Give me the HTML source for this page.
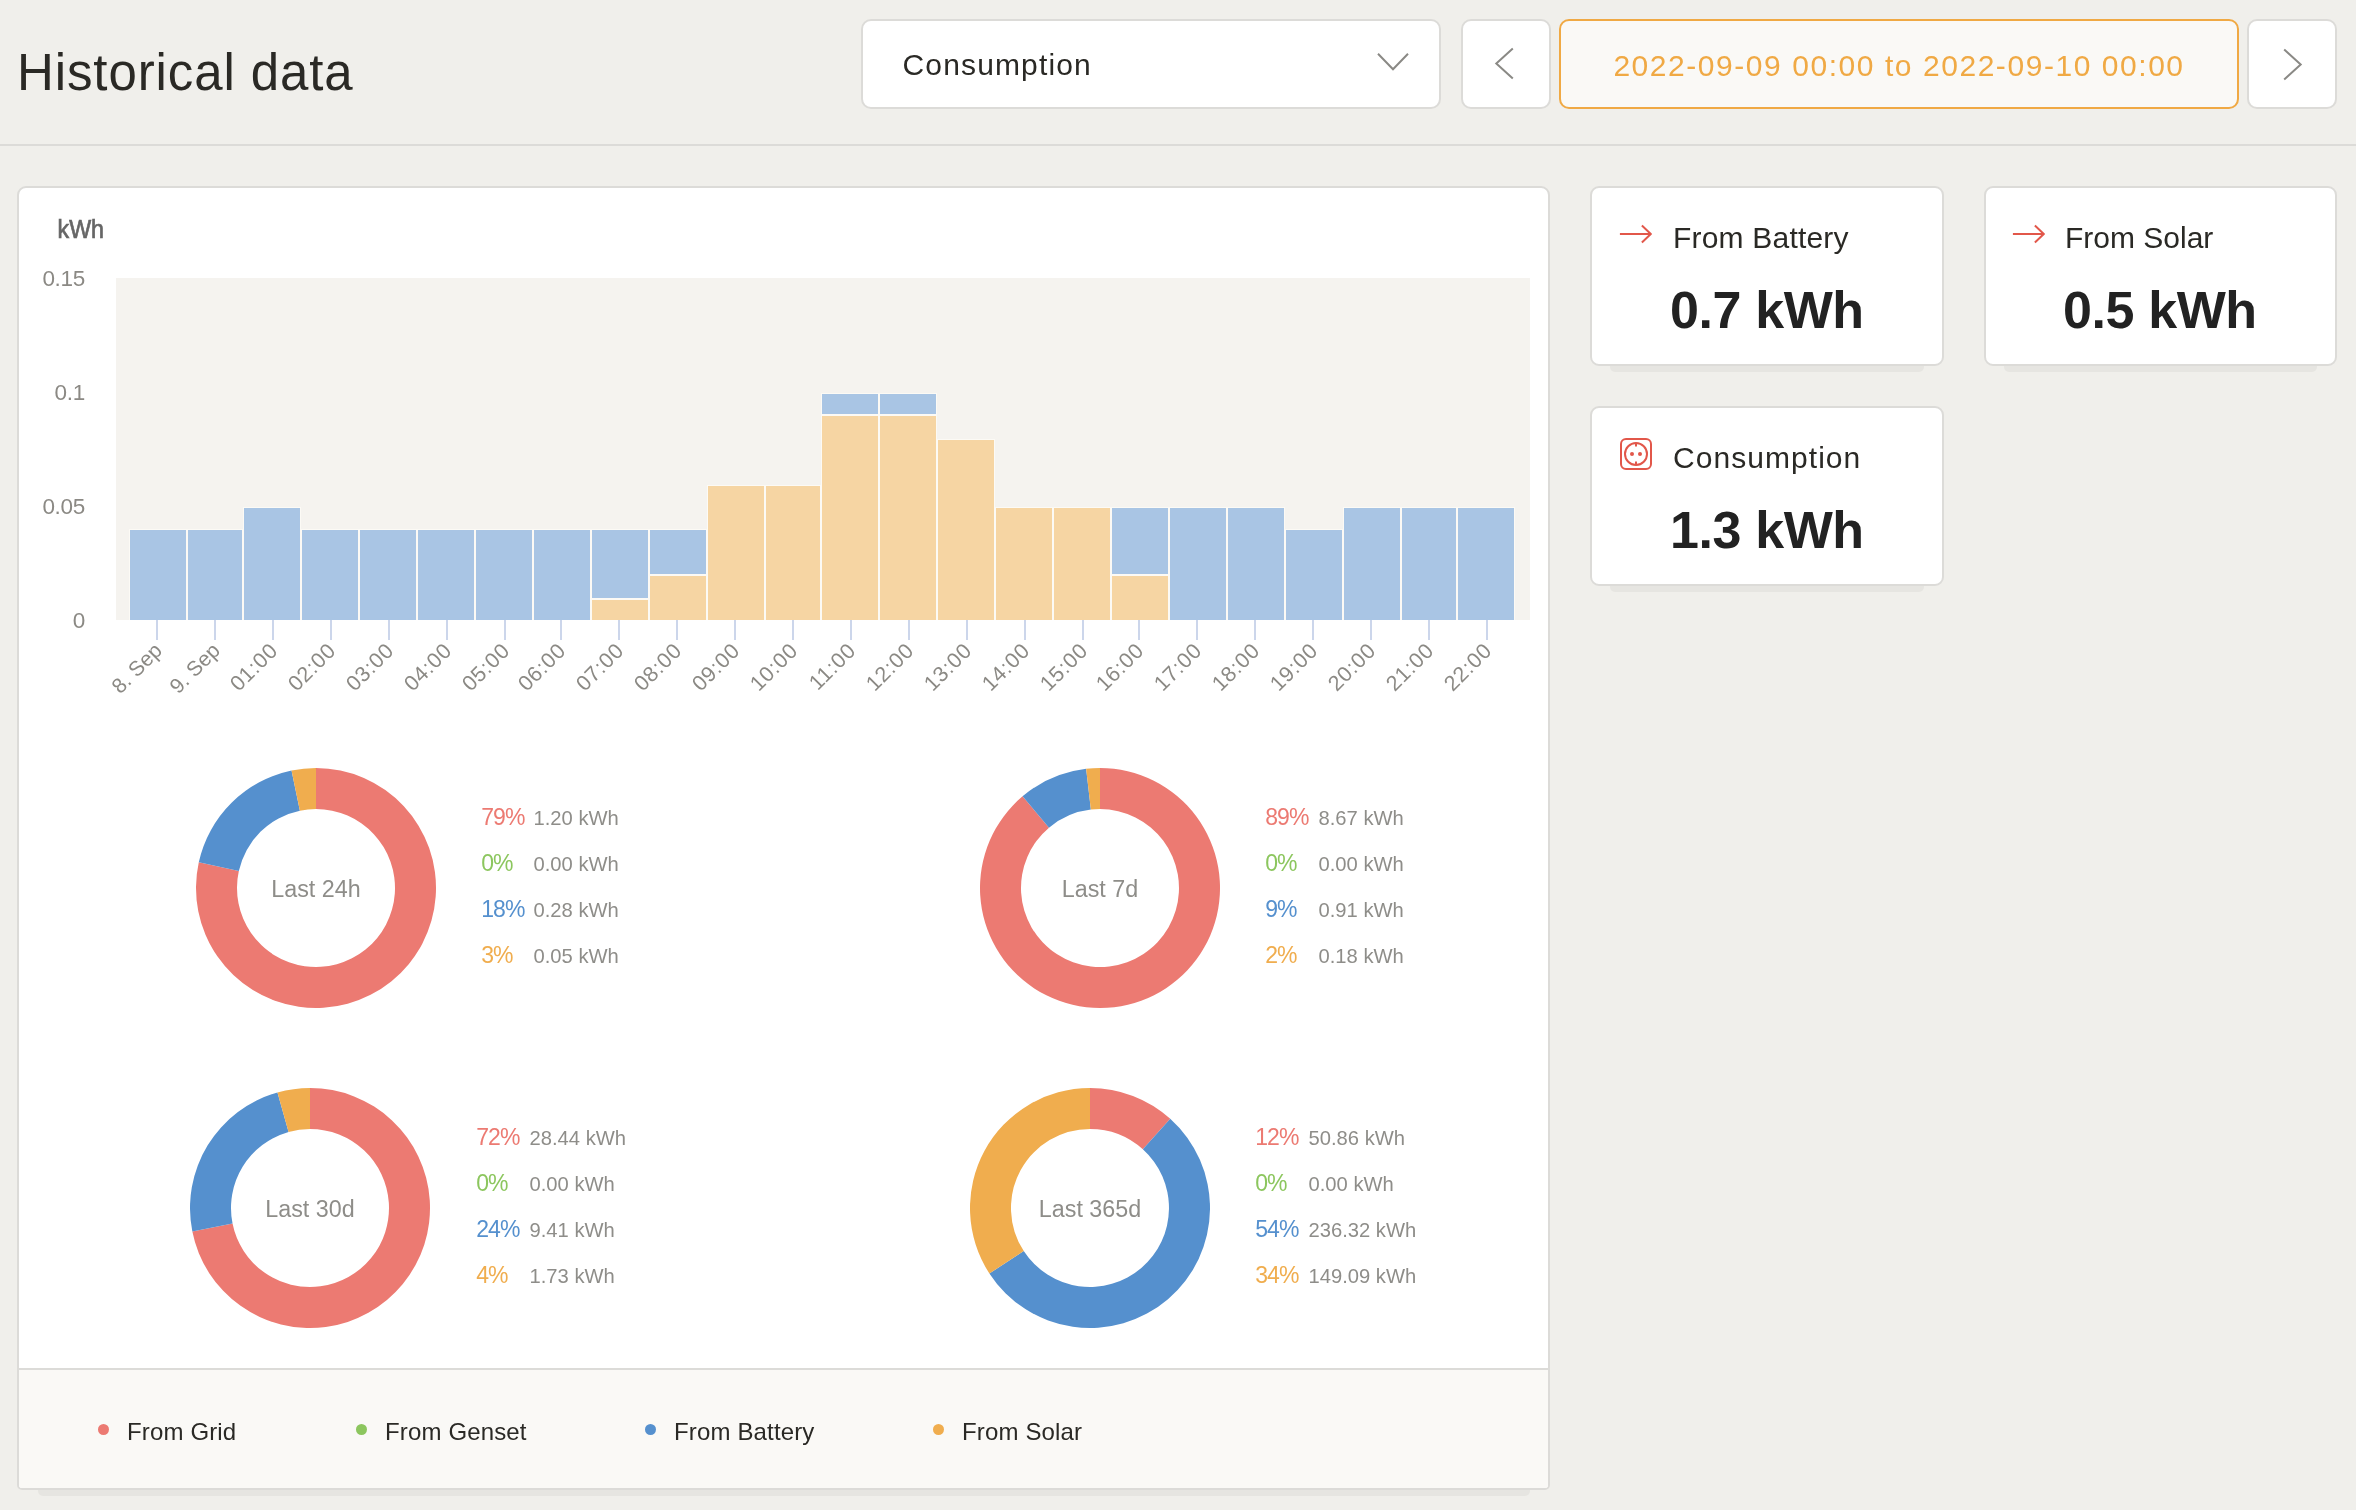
<!DOCTYPE html>
<html lang="en">
<head>
<meta charset="utf-8">
<title>Historical data</title>
<style>
html,body{margin:0;padding:0;}
body{width:2356px;height:1510px;overflow:hidden;background:#f0efeb;font-family:"Liberation Sans",sans-serif;color:#2a2925;position:relative;}
svg text{font-family:"Liberation Sans",sans-serif;}
h1,.box,.panel,.card{will-change:transform;}
.abs{position:absolute;}
h1{position:absolute;left:16.5px;top:43px;margin:0;font-weight:normal;font-size:51px;line-height:60px;letter-spacing:0.9px;white-space:nowrap;color:#2a2925;}
.hr{position:absolute;left:0;top:144px;width:2356px;height:2px;background:#dcdbd8;}
.box{position:absolute;box-sizing:border-box;border:2px solid #dcdbd8;border-radius:10px;background:#fff;top:19px;height:90px;}
.select{left:861px;width:580px;}
.select span{position:absolute;left:39.5px;top:25.5px;font-size:30px;line-height:36px;letter-spacing:1.15px;white-space:nowrap;}
.select svg{position:absolute;left:511.5px;top:29.3px;}
.prev{left:1461px;width:90px;}
.next{left:2247px;width:90px;}
.date{left:1559px;top:19px;width:680px;height:90px;border-color:#f0a944;background:#faf9f6;color:#f0a944;}
.date span{position:absolute;left:0;right:0;top:27px;text-align:center;font-size:30px;line-height:36px;letter-spacing:1.55px;white-space:nowrap;}
.panel{position:absolute;left:17px;top:186px;width:1533px;height:1304px;box-sizing:border-box;border:2px solid #dcdbd8;border-radius:9px 9px 5px 5px;background:#fff;}
.shadow{position:absolute;background:#e6e5e1;border-radius:0 0 5px 5px;height:20px;}
.panel svg{position:absolute;left:-2px;}
.panel svg.chart{top:-2px;}
.panel svg.donuts{top:560px;}
.footer{position:absolute;left:0;right:0;top:1180px;bottom:0;border-top:2px solid #dcdbd8;background:#faf9f6;border-radius:0 0 3px 3px;}
.leg{position:absolute;top:47px;letter-spacing:0.15px;font-size:24px;line-height:30px;white-space:nowrap;color:#2a2925;}
.leg i{position:absolute;left:-29px;top:7px;width:11px;height:11px;border-radius:50%;}
.card{position:absolute;box-sizing:border-box;width:353px;height:180px;border:2px solid #dcdbd8;border-radius:9px;background:#fff;}
.card .t{position:absolute;left:80px;top:32px;letter-spacing:0.2px;font-size:30px;line-height:36px;white-space:nowrap;}
.card .v{position:absolute;left:77px;top:92px;font-size:52px;line-height:60px;font-weight:bold;letter-spacing:-0.4px;white-space:nowrap;color:#222;}
.card svg{position:absolute;left:26px;top:28px;}
.card.w{width:354px;}
.card.w > *{margin-left:1px;}
</style>
</head>
<body>
<h1>Historical data</h1>
<div class="box select"><span>Consumption</span>
<svg width="36" height="24" viewBox="0 0 36 24"><path d="M3 3.8L18 19.3L33 3.8" fill="none" stroke="#8a8985" stroke-width="2"/></svg>
</div>
<div class="box prev"><svg class="abs" style="left:29px;top:25.4px" width="24" height="36" viewBox="0 0 24 36"><path d="M20.8 2.5L4.3 17.5L20.8 32.5" fill="none" stroke="#8a8985" stroke-width="2"/></svg></div>
<div class="box date"><span>2022-09-09 00:00 to 2022-09-10 00:00</span></div>
<div class="box next"><svg class="abs" style="left:31.8px;top:25.5px" width="24" height="36" viewBox="0 0 24 36"><path d="M3.2 2.5L19.7 17.5L3.2 32.5" fill="none" stroke="#8a8985" stroke-width="2"/></svg></div>
<div class="hr"></div>

<div class="shadow" style="left:38px;top:1476px;width:1492px;"></div>
<div class="panel">
<svg class="chart" width="1533" height="560" viewBox="17 186 1533 560">
<rect x="116" y="278" width="1414" height="342" fill="#f5f3ef"/>
<rect x="129" y="529" width="58" height="91" fill="#fcfaf5"/>
<rect x="130" y="530" width="56" height="90" fill="#a9c5e4"/>
<rect x="187" y="529" width="56" height="91" fill="#fcfaf5"/>
<rect x="188" y="530" width="54" height="90" fill="#a9c5e4"/>
<rect x="243" y="507" width="58" height="113" fill="#fcfaf5"/>
<rect x="244" y="508" width="56" height="112" fill="#a9c5e4"/>
<rect x="301" y="529" width="58" height="91" fill="#fcfaf5"/>
<rect x="302" y="530" width="56" height="90" fill="#a9c5e4"/>
<rect x="359" y="529" width="58" height="91" fill="#fcfaf5"/>
<rect x="360" y="530" width="56" height="90" fill="#a9c5e4"/>
<rect x="417" y="529" width="58" height="91" fill="#fcfaf5"/>
<rect x="418" y="530" width="56" height="90" fill="#a9c5e4"/>
<rect x="475" y="529" width="58" height="91" fill="#fcfaf5"/>
<rect x="476" y="530" width="56" height="90" fill="#a9c5e4"/>
<rect x="533" y="529" width="58" height="91" fill="#fcfaf5"/>
<rect x="534" y="530" width="56" height="90" fill="#a9c5e4"/>
<rect x="591" y="529" width="58" height="69" fill="#fcfaf5"/>
<rect x="592" y="530" width="56" height="68" fill="#a9c5e4"/>
<rect x="591" y="598" width="58" height="2" fill="#fcfaf5"/>
<rect x="591" y="599" width="58" height="21" fill="#fcfaf5"/>
<rect x="592" y="600" width="56" height="20" fill="#f6d5a3"/>
<rect x="649" y="529" width="58" height="45" fill="#fcfaf5"/>
<rect x="650" y="530" width="56" height="44" fill="#a9c5e4"/>
<rect x="649" y="574" width="58" height="2" fill="#fcfaf5"/>
<rect x="649" y="575" width="58" height="45" fill="#fcfaf5"/>
<rect x="650" y="576" width="56" height="44" fill="#f6d5a3"/>
<rect x="707" y="485" width="58" height="135" fill="#fcfaf5"/>
<rect x="708" y="486" width="56" height="134" fill="#f6d5a3"/>
<rect x="765" y="485" width="56" height="135" fill="#fcfaf5"/>
<rect x="766" y="486" width="54" height="134" fill="#f6d5a3"/>
<rect x="821" y="393" width="58" height="21" fill="#fcfaf5"/>
<rect x="822" y="394" width="56" height="20" fill="#a9c5e4"/>
<rect x="821" y="414" width="58" height="2" fill="#fcfaf5"/>
<rect x="821" y="415" width="58" height="205" fill="#fcfaf5"/>
<rect x="822" y="416" width="56" height="204" fill="#f6d5a3"/>
<rect x="879" y="393" width="58" height="21" fill="#fcfaf5"/>
<rect x="880" y="394" width="56" height="20" fill="#a9c5e4"/>
<rect x="879" y="414" width="58" height="2" fill="#fcfaf5"/>
<rect x="879" y="415" width="58" height="205" fill="#fcfaf5"/>
<rect x="880" y="416" width="56" height="204" fill="#f6d5a3"/>
<rect x="937" y="439" width="58" height="181" fill="#fcfaf5"/>
<rect x="938" y="440" width="56" height="180" fill="#f6d5a3"/>
<rect x="995" y="507" width="58" height="113" fill="#fcfaf5"/>
<rect x="996" y="508" width="56" height="112" fill="#f6d5a3"/>
<rect x="1053" y="507" width="58" height="113" fill="#fcfaf5"/>
<rect x="1054" y="508" width="56" height="112" fill="#f6d5a3"/>
<rect x="1111" y="507" width="58" height="67" fill="#fcfaf5"/>
<rect x="1112" y="508" width="56" height="66" fill="#a9c5e4"/>
<rect x="1111" y="574" width="58" height="2" fill="#fcfaf5"/>
<rect x="1111" y="575" width="58" height="45" fill="#fcfaf5"/>
<rect x="1112" y="576" width="56" height="44" fill="#f6d5a3"/>
<rect x="1169" y="507" width="58" height="113" fill="#fcfaf5"/>
<rect x="1170" y="508" width="56" height="112" fill="#a9c5e4"/>
<rect x="1227" y="507" width="58" height="113" fill="#fcfaf5"/>
<rect x="1228" y="508" width="56" height="112" fill="#a9c5e4"/>
<rect x="1285" y="529" width="58" height="91" fill="#fcfaf5"/>
<rect x="1286" y="530" width="56" height="90" fill="#a9c5e4"/>
<rect x="1343" y="507" width="58" height="113" fill="#fcfaf5"/>
<rect x="1344" y="508" width="56" height="112" fill="#a9c5e4"/>
<rect x="1401" y="507" width="56" height="113" fill="#fcfaf5"/>
<rect x="1402" y="508" width="54" height="112" fill="#a9c5e4"/>
<rect x="1457" y="507" width="58" height="113" fill="#fcfaf5"/>
<rect x="1458" y="508" width="56" height="112" fill="#a9c5e4"/>
<rect x="156" y="620" width="2" height="20" fill="#ccd6eb"/>
<rect x="214" y="620" width="2" height="20" fill="#ccd6eb"/>
<rect x="272" y="620" width="2" height="20" fill="#ccd6eb"/>
<rect x="330" y="620" width="2" height="20" fill="#ccd6eb"/>
<rect x="388" y="620" width="2" height="20" fill="#ccd6eb"/>
<rect x="446" y="620" width="2" height="20" fill="#ccd6eb"/>
<rect x="504" y="620" width="2" height="20" fill="#ccd6eb"/>
<rect x="560" y="620" width="2" height="20" fill="#ccd6eb"/>
<rect x="618" y="620" width="2" height="20" fill="#ccd6eb"/>
<rect x="676" y="620" width="2" height="20" fill="#ccd6eb"/>
<rect x="734" y="620" width="2" height="20" fill="#ccd6eb"/>
<rect x="792" y="620" width="2" height="20" fill="#ccd6eb"/>
<rect x="850" y="620" width="2" height="20" fill="#ccd6eb"/>
<rect x="908" y="620" width="2" height="20" fill="#ccd6eb"/>
<rect x="966" y="620" width="2" height="20" fill="#ccd6eb"/>
<rect x="1024" y="620" width="2" height="20" fill="#ccd6eb"/>
<rect x="1082" y="620" width="2" height="20" fill="#ccd6eb"/>
<rect x="1138" y="620" width="2" height="20" fill="#ccd6eb"/>
<rect x="1196" y="620" width="2" height="20" fill="#ccd6eb"/>
<rect x="1254" y="620" width="2" height="20" fill="#ccd6eb"/>
<rect x="1312" y="620" width="2" height="20" fill="#ccd6eb"/>
<rect x="1370" y="620" width="2" height="20" fill="#ccd6eb"/>
<rect x="1428" y="620" width="2" height="20" fill="#ccd6eb"/>
<rect x="1486" y="620" width="2" height="20" fill="#ccd6eb"/>
<text x="85" y="286" text-anchor="end" font-size="22.5" letter-spacing="-0.3" fill="#8b8984">0.15</text>
<text x="85" y="400" text-anchor="end" font-size="22.5" letter-spacing="-0.3" fill="#8b8984">0.1</text>
<text x="85" y="514" text-anchor="end" font-size="22.5" letter-spacing="-0.3" fill="#8b8984">0.05</text>
<text x="85" y="628" text-anchor="end" font-size="22.5" letter-spacing="-0.3" fill="#8b8984">0</text>
<text x="163.2" y="651.8" text-anchor="end" font-size="21" fill="#8b8984" transform="rotate(-45 163.2 651.8)">8. Sep</text>
<text x="221.2" y="651.8" text-anchor="end" font-size="21" fill="#8b8984" transform="rotate(-45 221.2 651.8)">9. Sep</text>
<text x="279.2" y="651.8" text-anchor="end" font-size="21.5" letter-spacing="0.7" fill="#8b8984" transform="rotate(-45 279.2 651.8)">01:00</text>
<text x="337.2" y="651.8" text-anchor="end" font-size="21.5" letter-spacing="0.7" fill="#8b8984" transform="rotate(-45 337.2 651.8)">02:00</text>
<text x="395.2" y="651.8" text-anchor="end" font-size="21.5" letter-spacing="0.7" fill="#8b8984" transform="rotate(-45 395.2 651.8)">03:00</text>
<text x="453.2" y="651.8" text-anchor="end" font-size="21.5" letter-spacing="0.7" fill="#8b8984" transform="rotate(-45 453.2 651.8)">04:00</text>
<text x="511.2" y="651.8" text-anchor="end" font-size="21.5" letter-spacing="0.7" fill="#8b8984" transform="rotate(-45 511.2 651.8)">05:00</text>
<text x="567.2" y="651.8" text-anchor="end" font-size="21.5" letter-spacing="0.7" fill="#8b8984" transform="rotate(-45 567.2 651.8)">06:00</text>
<text x="625.2" y="651.8" text-anchor="end" font-size="21.5" letter-spacing="0.7" fill="#8b8984" transform="rotate(-45 625.2 651.8)">07:00</text>
<text x="683.2" y="651.8" text-anchor="end" font-size="21.5" letter-spacing="0.7" fill="#8b8984" transform="rotate(-45 683.2 651.8)">08:00</text>
<text x="741.2" y="651.8" text-anchor="end" font-size="21.5" letter-spacing="0.7" fill="#8b8984" transform="rotate(-45 741.2 651.8)">09:00</text>
<text x="799.2" y="651.8" text-anchor="end" font-size="21.5" letter-spacing="0.7" fill="#8b8984" transform="rotate(-45 799.2 651.8)">10:00</text>
<text x="857.2" y="651.8" text-anchor="end" font-size="21.5" letter-spacing="0.7" fill="#8b8984" transform="rotate(-45 857.2 651.8)">11:00</text>
<text x="915.2" y="651.8" text-anchor="end" font-size="21.5" letter-spacing="0.7" fill="#8b8984" transform="rotate(-45 915.2 651.8)">12:00</text>
<text x="973.2" y="651.8" text-anchor="end" font-size="21.5" letter-spacing="0.7" fill="#8b8984" transform="rotate(-45 973.2 651.8)">13:00</text>
<text x="1031.2" y="651.8" text-anchor="end" font-size="21.5" letter-spacing="0.7" fill="#8b8984" transform="rotate(-45 1031.2 651.8)">14:00</text>
<text x="1089.2" y="651.8" text-anchor="end" font-size="21.5" letter-spacing="0.7" fill="#8b8984" transform="rotate(-45 1089.2 651.8)">15:00</text>
<text x="1145.2" y="651.8" text-anchor="end" font-size="21.5" letter-spacing="0.7" fill="#8b8984" transform="rotate(-45 1145.2 651.8)">16:00</text>
<text x="1203.2" y="651.8" text-anchor="end" font-size="21.5" letter-spacing="0.7" fill="#8b8984" transform="rotate(-45 1203.2 651.8)">17:00</text>
<text x="1261.2" y="651.8" text-anchor="end" font-size="21.5" letter-spacing="0.7" fill="#8b8984" transform="rotate(-45 1261.2 651.8)">18:00</text>
<text x="1319.2" y="651.8" text-anchor="end" font-size="21.5" letter-spacing="0.7" fill="#8b8984" transform="rotate(-45 1319.2 651.8)">19:00</text>
<text x="1377.2" y="651.8" text-anchor="end" font-size="21.5" letter-spacing="0.7" fill="#8b8984" transform="rotate(-45 1377.2 651.8)">20:00</text>
<text x="1435.2" y="651.8" text-anchor="end" font-size="21.5" letter-spacing="0.7" fill="#8b8984" transform="rotate(-45 1435.2 651.8)">21:00</text>
<text x="1493.2" y="651.8" text-anchor="end" font-size="21.5" letter-spacing="0.7" fill="#8b8984" transform="rotate(-45 1493.2 651.8)">22:00</text>
<text x="57.5" y="238" font-size="25" fill="#666666" stroke="#666666" stroke-width="0.7" textLength="46.5" lengthAdjust="spacingAndGlyphs">kWh</text>
</svg>
<svg class="donuts" width="1533" height="620" viewBox="17 748 1533 620">
<path d="M316.00 768.00A120 120 0 1 1 198.78 862.33L238.83 871.10A79 79 0 1 0 316.00 809.00Z" fill="#ec7a72"/>
<path d="M198.78 862.33A120 120 0 0 1 291.53 770.52L299.89 810.66A79 79 0 0 0 238.83 871.10Z" fill="#5590ce"/>
<path d="M291.53 770.52A120 120 0 0 1 316.00 768.00L316.00 809.00A79 79 0 0 0 299.89 810.66Z" fill="#f0ad4e"/>
<text x="316" y="897" text-anchor="middle" font-size="23.3" fill="#8e8d89">Last 24h</text>
<text x="481.3" y="825" font-size="23" fill="#ec7a72" letter-spacing="-1">79%</text>
<text x="533.5" y="825" font-size="20.2" fill="#8e8d89">1.20 kWh</text>
<text x="481.3" y="871" font-size="23" fill="#8cc65e" letter-spacing="-1">0%</text>
<text x="533.5" y="871" font-size="20.2" fill="#8e8d89">0.00 kWh</text>
<text x="481.3" y="917" font-size="23" fill="#5590ce" letter-spacing="-1">18%</text>
<text x="533.5" y="917" font-size="20.2" fill="#8e8d89">0.28 kWh</text>
<text x="481.3" y="963" font-size="23" fill="#f0ad4e" letter-spacing="-1">3%</text>
<text x="533.5" y="963" font-size="20.2" fill="#8e8d89">0.05 kWh</text>
<path d="M1100.00 768.00A120 120 0 1 1 1022.54 796.35L1049.00 827.66A79 79 0 1 0 1100.00 809.00Z" fill="#ec7a72"/>
<path d="M1022.54 796.35A120 120 0 0 1 1086.13 768.80L1090.87 809.53A79 79 0 0 0 1049.00 827.66Z" fill="#5590ce"/>
<path d="M1086.13 768.80A120 120 0 0 1 1100.00 768.00L1100.00 809.00A79 79 0 0 0 1090.87 809.53Z" fill="#f0ad4e"/>
<text x="1100" y="897" text-anchor="middle" font-size="23.3" fill="#8e8d89">Last 7d</text>
<text x="1265.3" y="825" font-size="23" fill="#ec7a72" letter-spacing="-1">89%</text>
<text x="1318.5" y="825" font-size="20.2" fill="#8e8d89">8.67 kWh</text>
<text x="1265.3" y="871" font-size="23" fill="#8cc65e" letter-spacing="-1">0%</text>
<text x="1318.5" y="871" font-size="20.2" fill="#8e8d89">0.00 kWh</text>
<text x="1265.3" y="917" font-size="23" fill="#5590ce" letter-spacing="-1">9%</text>
<text x="1318.5" y="917" font-size="20.2" fill="#8e8d89">0.91 kWh</text>
<text x="1265.3" y="963" font-size="23" fill="#f0ad4e" letter-spacing="-1">2%</text>
<text x="1318.5" y="963" font-size="20.2" fill="#8e8d89">0.18 kWh</text>
<path d="M310.00 1088.00A120 120 0 1 1 192.34 1231.56L232.54 1223.51A79 79 0 1 0 310.00 1129.00Z" fill="#ec7a72"/>
<path d="M192.34 1231.56A120 120 0 0 1 277.46 1092.50L288.58 1131.96A79 79 0 0 0 232.54 1223.51Z" fill="#5590ce"/>
<path d="M277.46 1092.50A120 120 0 0 1 310.00 1088.00L310.00 1129.00A79 79 0 0 0 288.58 1131.96Z" fill="#f0ad4e"/>
<text x="310" y="1217" text-anchor="middle" font-size="23.3" fill="#8e8d89">Last 30d</text>
<text x="476.3" y="1145" font-size="23" fill="#ec7a72" letter-spacing="-1">72%</text>
<text x="529.5" y="1145" font-size="20.2" fill="#8e8d89">28.44 kWh</text>
<text x="476.3" y="1191" font-size="23" fill="#8cc65e" letter-spacing="-1">0%</text>
<text x="529.5" y="1191" font-size="20.2" fill="#8e8d89">0.00 kWh</text>
<text x="476.3" y="1237" font-size="23" fill="#5590ce" letter-spacing="-1">24%</text>
<text x="529.5" y="1237" font-size="20.2" fill="#8e8d89">9.41 kWh</text>
<text x="476.3" y="1283" font-size="23" fill="#f0ad4e" letter-spacing="-1">4%</text>
<text x="529.5" y="1283" font-size="20.2" fill="#8e8d89">1.73 kWh</text>
<path d="M1090.00 1088.00A120 120 0 0 1 1170.25 1118.78L1142.83 1149.26A79 79 0 0 0 1090.00 1129.00Z" fill="#ec7a72"/>
<path d="M1170.25 1118.78A120 120 0 1 1 989.39 1273.40L1023.76 1251.06A79 79 0 1 0 1142.83 1149.26Z" fill="#5590ce"/>
<path d="M989.39 1273.40A120 120 0 0 1 1090.00 1088.00L1090.00 1129.00A79 79 0 0 0 1023.76 1251.06Z" fill="#f0ad4e"/>
<text x="1090" y="1217" text-anchor="middle" font-size="23.3" fill="#8e8d89">Last 365d</text>
<text x="1255.3" y="1145" font-size="23" fill="#ec7a72" letter-spacing="-1">12%</text>
<text x="1308.5" y="1145" font-size="20.2" fill="#8e8d89">50.86 kWh</text>
<text x="1255.3" y="1191" font-size="23" fill="#8cc65e" letter-spacing="-1">0%</text>
<text x="1308.5" y="1191" font-size="20.2" fill="#8e8d89">0.00 kWh</text>
<text x="1255.3" y="1237" font-size="23" fill="#5590ce" letter-spacing="-1">54%</text>
<text x="1308.5" y="1237" font-size="20.2" fill="#8e8d89">236.32 kWh</text>
<text x="1255.3" y="1283" font-size="23" fill="#f0ad4e" letter-spacing="-1">34%</text>
<text x="1308.5" y="1283" font-size="20.2" fill="#8e8d89">149.09 kWh</text>
</svg>
<div class="footer">
<div class="leg" style="left:108px"><i style="background:#ec7a72"></i>From Grid</div>
<div class="leg" style="left:366px"><i style="background:#8cc65e"></i>From Genset</div>
<div class="leg" style="left:655px"><i style="background:#5590ce"></i>From Battery</div>
<div class="leg" style="left:943px"><i style="background:#f0ad4e"></i>From Solar</div>
</div>
</div>

<div class="shadow" style="left:1610px;top:352px;width:314px;"></div>
<div class="card w" style="left:1590px;top:186px">
<svg width="34" height="34" viewBox="0 0 34 34"><path d="M3 17H33.4M25 8.5L33.9 17L25 25.5" fill="none" stroke="#e2574a" stroke-width="2" transform="translate(-2.1 1)"/></svg>
<div class="t">From Battery</div><div class="v">0.7 kWh</div>
</div>
<div class="shadow" style="left:2004px;top:352px;width:313px;"></div>
<div class="card" style="left:1984px;top:186px">
<svg width="34" height="34" viewBox="0 0 34 34"><path d="M3 17H33.4M25 8.5L33.9 17L25 25.5" fill="none" stroke="#e2574a" stroke-width="2" transform="translate(-2.1 1)"/></svg>
<div class="t" style="letter-spacing:0;left:79px">From Solar</div><div class="v">0.5 kWh</div>
</div>
<div class="shadow" style="left:1610px;top:572px;width:314px;"></div>
<div class="card w" style="left:1590px;top:406px">
<svg width="34" height="34" viewBox="0 0 34 34"><rect x="2" y="3" width="30" height="30" rx="5" fill="none" stroke="#e2574a" stroke-width="2"/><circle cx="17" cy="18" r="11" fill="none" stroke="#e2574a" stroke-width="2"/><circle cx="13" cy="18" r="2" fill="#e2574a"/><circle cx="21" cy="18" r="2" fill="#e2574a"/><path d="M17 7V10.5M17 25.5V29" stroke="#e2574a" stroke-width="2"/></svg>
<div class="t" style="letter-spacing:1.05px">Consumption</div><div class="v">1.3 kWh</div>
</div>
</body>
</html>
